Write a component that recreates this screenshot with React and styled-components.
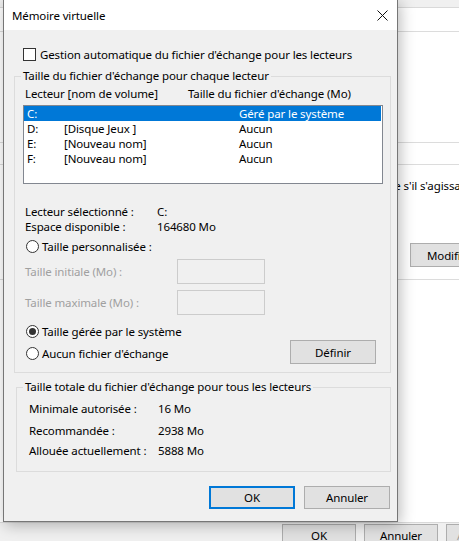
import React from "react";
import styled, { createGlobalStyle } from "styled-components";

const UI_FONT = `"Noto Sans", "Open Sans", "DejaVu Sans", sans-serif`;

const GlobalStyle = createGlobalStyle`
  * { box-sizing: border-box; }
  html, body { margin: 0; padding: 0; }
  body {
    width: 459px;
    height: 541px;
    overflow: hidden;
    background: #f0f0f0;
    font-family: ${UI_FONT};
    font-size: 11.5px;
    letter-spacing: -0.12px;
    color: #000;
  }
`;

const Screen = styled.div`
  position: relative;
  width: 459px;
  height: 541px;
  overflow: hidden;
`;

/* ---------- Options de performances (window underneath) ---------- */

const ParentWindow = styled.div`
  width: 540px;
  margin-left: -12px;
  padding-top: 7px;
  background: #f0f0f0;
  display: flex;
  flex-direction: column;
`;

const TabPage = styled.div`
  height: 516px;
  background: #fff;
  border: 1px solid #d9d9d9;
  padding: 15px 12px 0 5px;
  display: flex;
  flex-direction: column;
`;

const PageGroup = styled.fieldset`
  margin: ${(p) => p.$mt}px 0 0;
  padding: 0 8px 0 0;
  height: ${(p) => p.$h}px;
  border: 1px solid #dcdcdc;
  min-width: 0;
  display: flex;
  flex-direction: column;
`;

const PageLegend = styled.legend`
  padding: 0 2px;
  margin-left: 16px;
  line-height: 16px;
`;

const PageText = styled.div`
  margin-top: ${(p) => p.$mt || 0}px;
  margin-left: ${(p) => p.$indent || 0}px;
  line-height: 16px;
  white-space: nowrap;
`;

const PageSizeRow = styled.div`
  margin-top: 49px;
  margin-left: 21px;
  display: flex;
  align-items: center;
  justify-content: space-between;
  padding-right: 21px;
`;

const PageFooter = styled.div`
  display: flex;
  justify-content: flex-end;
  gap: 8px;
  padding: 1px 8px 0 0;
`;

const Button = styled.button`
  width: ${(p) => p.$w || 86}px;
  height: ${(p) => p.$h || 23}px;
  flex: none;
  padding: 0;
  margin: 0;
  background: #e1e1e1;
  border: ${(p) => (p.$primary ? "2px solid #0078d7" : "1px solid #adadad")};
  font-family: ${UI_FONT};
  font-size: 11.5px;
  letter-spacing: -0.12px;
  color: ${(p) => (p.$disabled ? "#a0a0a0" : "#000")};
  text-align: ${(p) => (p.$left ? "left" : "center")};
  padding-left: ${(p) => (p.$left ? 16 : 0)}px;
  white-space: nowrap;
  overflow: hidden;
`;

/* ---------- Mémoire virtuelle dialog ---------- */

const Dialog = styled.div`
  position: absolute;
  left: 3px;
  top: -1px;
  width: 395px;
  height: 523px;
  border: 1px solid #767676;
  background: #f0f0f0;
  box-shadow: 2px 3px 14px rgba(0, 0, 0, 0.28);
  display: flex;
  flex-direction: column;
`;

const TitleBar = styled.div`
  height: 30px;
  flex: none;
  background: #fff;
  display: flex;
  align-items: center;
  justify-content: space-between;
  padding: 0 9px 0 8px;
`;

const DialogBody = styled.div`
  flex: 1;
  display: flex;
  flex-direction: column;
`;

const CheckRow = styled.label`
  margin: 17px 0 0 19px;
  height: 15px;
  display: flex;
  align-items: center;
  gap: 4px;
`;

const CheckBox = styled.span`
  width: 13px;
  height: 13px;
  flex: none;
  border: 1px solid #333;
  background: #fff;
`;

const Group = styled.fieldset`
  margin: ${(p) => p.$mt}px 6px 0 ${(p) => p.$ml}px;
  padding: 0 7px ${(p) => p.$pb}px 8px;
  border: 1px solid #dcdcdc;
  min-width: 0;
  display: flex;
  flex-direction: column;
`;

const Legend = styled.legend`
  padding: 0 2px;
  margin-left: -2px;
  line-height: 16px;
`;

const ColumnHeader = styled.div`
  margin-top: 2px;
  padding-left: 2px;
  height: 16px;
  line-height: 16px;
  display: grid;
  grid-template-columns: 163px 1fr;
  white-space: nowrap;
`;

const ListBox = styled.div`
  margin-top: 3px;
  height: 79px;
  border: 1px solid #828790;
  background: #fff;
  display: flex;
  flex-direction: column;
`;

const DriveRow = styled.div`
  height: 15px;
  line-height: 15px;
  margin-right: 1px;
  padding-left: 3px;
  display: grid;
  grid-template-columns: 37px 175px 1fr;
  white-space: nowrap;
  background: ${(p) => (p.$selected ? "#0078d7" : "transparent")};
  color: ${(p) => (p.$selected ? "#fff" : "#000")};
`;

const InfoGrid = styled.div`
  margin-top: 20px;
  padding-left: 2px;
  display: grid;
  grid-template-columns: ${(p) => p.$label}px 1fr;
  grid-auto-rows: 15px;
  line-height: 15px;
  white-space: nowrap;
`;

const RadioRow = styled.label`
  margin-top: ${(p) => p.$mt}px;
  height: 16px;
  padding-left: 3px;
  display: flex;
  align-items: center;
  gap: 3px;
  white-space: nowrap;
`;

const Radio = styled.span`
  width: 13px;
  height: 13px;
  flex: none;
  border-radius: 50%;
  border: 1px solid #333;
  background: #fff;
  display: flex;
  align-items: center;
  justify-content: center;
  &::after {
    content: "";
    width: 7px;
    height: 7px;
    border-radius: 50%;
    background: ${(p) => (p.$checked ? "#333" : "transparent")};
  }
`;

const SizeRow = styled.div`
  margin-top: ${(p) => p.$mt}px;
  display: flex;
  align-items: center;
`;

const SizeLabel = styled.span`
  width: 154px;
  padding-left: 2px;
  color: #a0a0a0;
  white-space: nowrap;
`;

const SizeInput = styled.span`
  width: 88px;
  height: 25px;
  border: 1px solid #cccccc;
  background: #f0f0f0;
`;

const ActionRow = styled.div`
  margin-top: 1px;
  height: 24px;
  display: flex;
  align-items: center;
  padding-right: 7px;
  justify-content: space-between;
`;

const Totals = styled.div`
  padding-left: 4px;
  display: flex;
  flex-direction: column;
`;

const TotalRow = styled.div`
  margin-top: ${(p) => p.$mt}px;
  height: 16px;
  line-height: 16px;
  display: grid;
  grid-template-columns: 129px 1fr;
  white-space: nowrap;
`;

const Footer = styled.div`
  margin-top: 14px;
  display: flex;
  justify-content: flex-end;
  gap: 9px;
  padding-right: 7px;
`;

const CloseIcon = () => (
  <svg width="11" height="11" viewBox="0 0 11 11" aria-hidden="true">
    <path d="M0.5 0.5 L10.5 10.5 M10.5 0.5 L0.5 10.5" stroke="#111" strokeWidth="1" fill="none" />
  </svg>
);

const drives = [
  { letter: "C:", name: "", size: "Géré par le système", selected: true },
  { letter: "D:", name: "[Disque Jeux ]", size: "Aucun" },
  { letter: "E:", name: "[Nouveau nom]", size: "Aucun" },
  { letter: "F:", name: "[Nouveau nom]", size: "Aucun" },
];

export default function App() {
  return (
    <Screen>
      <GlobalStyle />

      <ParentWindow>
        <TabPage>
          <PageGroup $mt={0} $h={120}>
            <PageLegend>Planification du processeur</PageLegend>
            <PageText $mt={6} $indent={21}>Choisissez une meilleure performance pour :</PageText>
          </PageGroup>
          <PageGroup $mt={13} $h={124}>
            <PageLegend>Mémoire virtuelle</PageLegend>
            <PageText $mt={6} $indent={21}>
              Un fichier d'échange est une zone du disque que Windows utilise comme s'il s'agissait de mémoire RAM.
            </PageText>
            <PageSizeRow>
              <span>Taille totale du fichier d'échange :</span>
              <Button $w={75} $h={24} $left>
                Modifier...
              </Button>
            </PageSizeRow>
          </PageGroup>
        </TabPage>
        <PageFooter>
          <Button $w={74}>OK</Button>
          <Button $w={74}>Annuler</Button>
          <Button $w={74} $disabled>Appliquer</Button>
        </PageFooter>
      </ParentWindow>

      <Dialog>
        <TitleBar>
          <span>Mémoire virtuelle</span>
          <CloseIcon />
        </TitleBar>
        <DialogBody>
          <CheckRow>
            <CheckBox />
            <span>Gestion automatique du fichier d'échange pour les lecteurs</span>
          </CheckRow>

          <Group $mt={6} $ml={10} $pb={8}>
            <Legend>Taille du fichier d'échange pour chaque lecteur</Legend>
            <ColumnHeader>
              <span>Lecteur [nom de volume]</span>
              <span>Taille du fichier d'échange (Mo)</span>
            </ColumnHeader>
            <ListBox>
              {drives.map((d) => (
                <DriveRow key={d.letter} $selected={d.selected}>
                  <span>{d.letter}</span>
                  <span>{d.name}</span>
                  <span>{d.size}</span>
                </DriveRow>
              ))}
            </ListBox>

            <InfoGrid $label={132}>
              <span>Lecteur sélectionné :</span>
              <span>C:</span>
              <span>Espace disponible :</span>
              <span>164680 Mo</span>
            </InfoGrid>

            <RadioRow $mt={4}>
              <Radio />
              <span>Taille personnalisée :</span>
            </RadioRow>
            <SizeRow $mt={5}>
              <SizeLabel>Taille initiale (Mo) :</SizeLabel>
              <SizeInput />
            </SizeRow>
            <SizeRow $mt={6}>
              <SizeLabel>Taille maximale (Mo) :</SizeLabel>
              <SizeInput />
            </SizeRow>
            <RadioRow $mt={8}>
              <Radio $checked />
              <span>Taille gérée par le système</span>
            </RadioRow>
            <ActionRow>
              <RadioRow $mt={3}>
                <Radio />
                <span>Aucun fichier d'échange</span>
              </RadioRow>
              <Button $h={24}>Définir</Button>
            </ActionRow>
          </Group>

          <Group $mt={6} $ml={12} $pb={12}>
            <Legend>Taille totale du fichier d'échange pour tous les lecteurs</Legend>
            <Totals>
              <TotalRow $mt={6}>
                <span>Minimale autorisée :</span>
                <span>16 Mo</span>
              </TotalRow>
              <TotalRow $mt={6}>
                <span>Recommandée :</span>
                <span>2938 Mo</span>
              </TotalRow>
              <TotalRow $mt={4}>
                <span>Allouée actuellement :</span>
                <span>5888 Mo</span>
              </TotalRow>
            </Totals>
          </Group>

          <Footer>
            <Button $primary>OK</Button>
            <Button>Annuler</Button>
          </Footer>
        </DialogBody>
      </Dialog>
    </Screen>
  );
}
